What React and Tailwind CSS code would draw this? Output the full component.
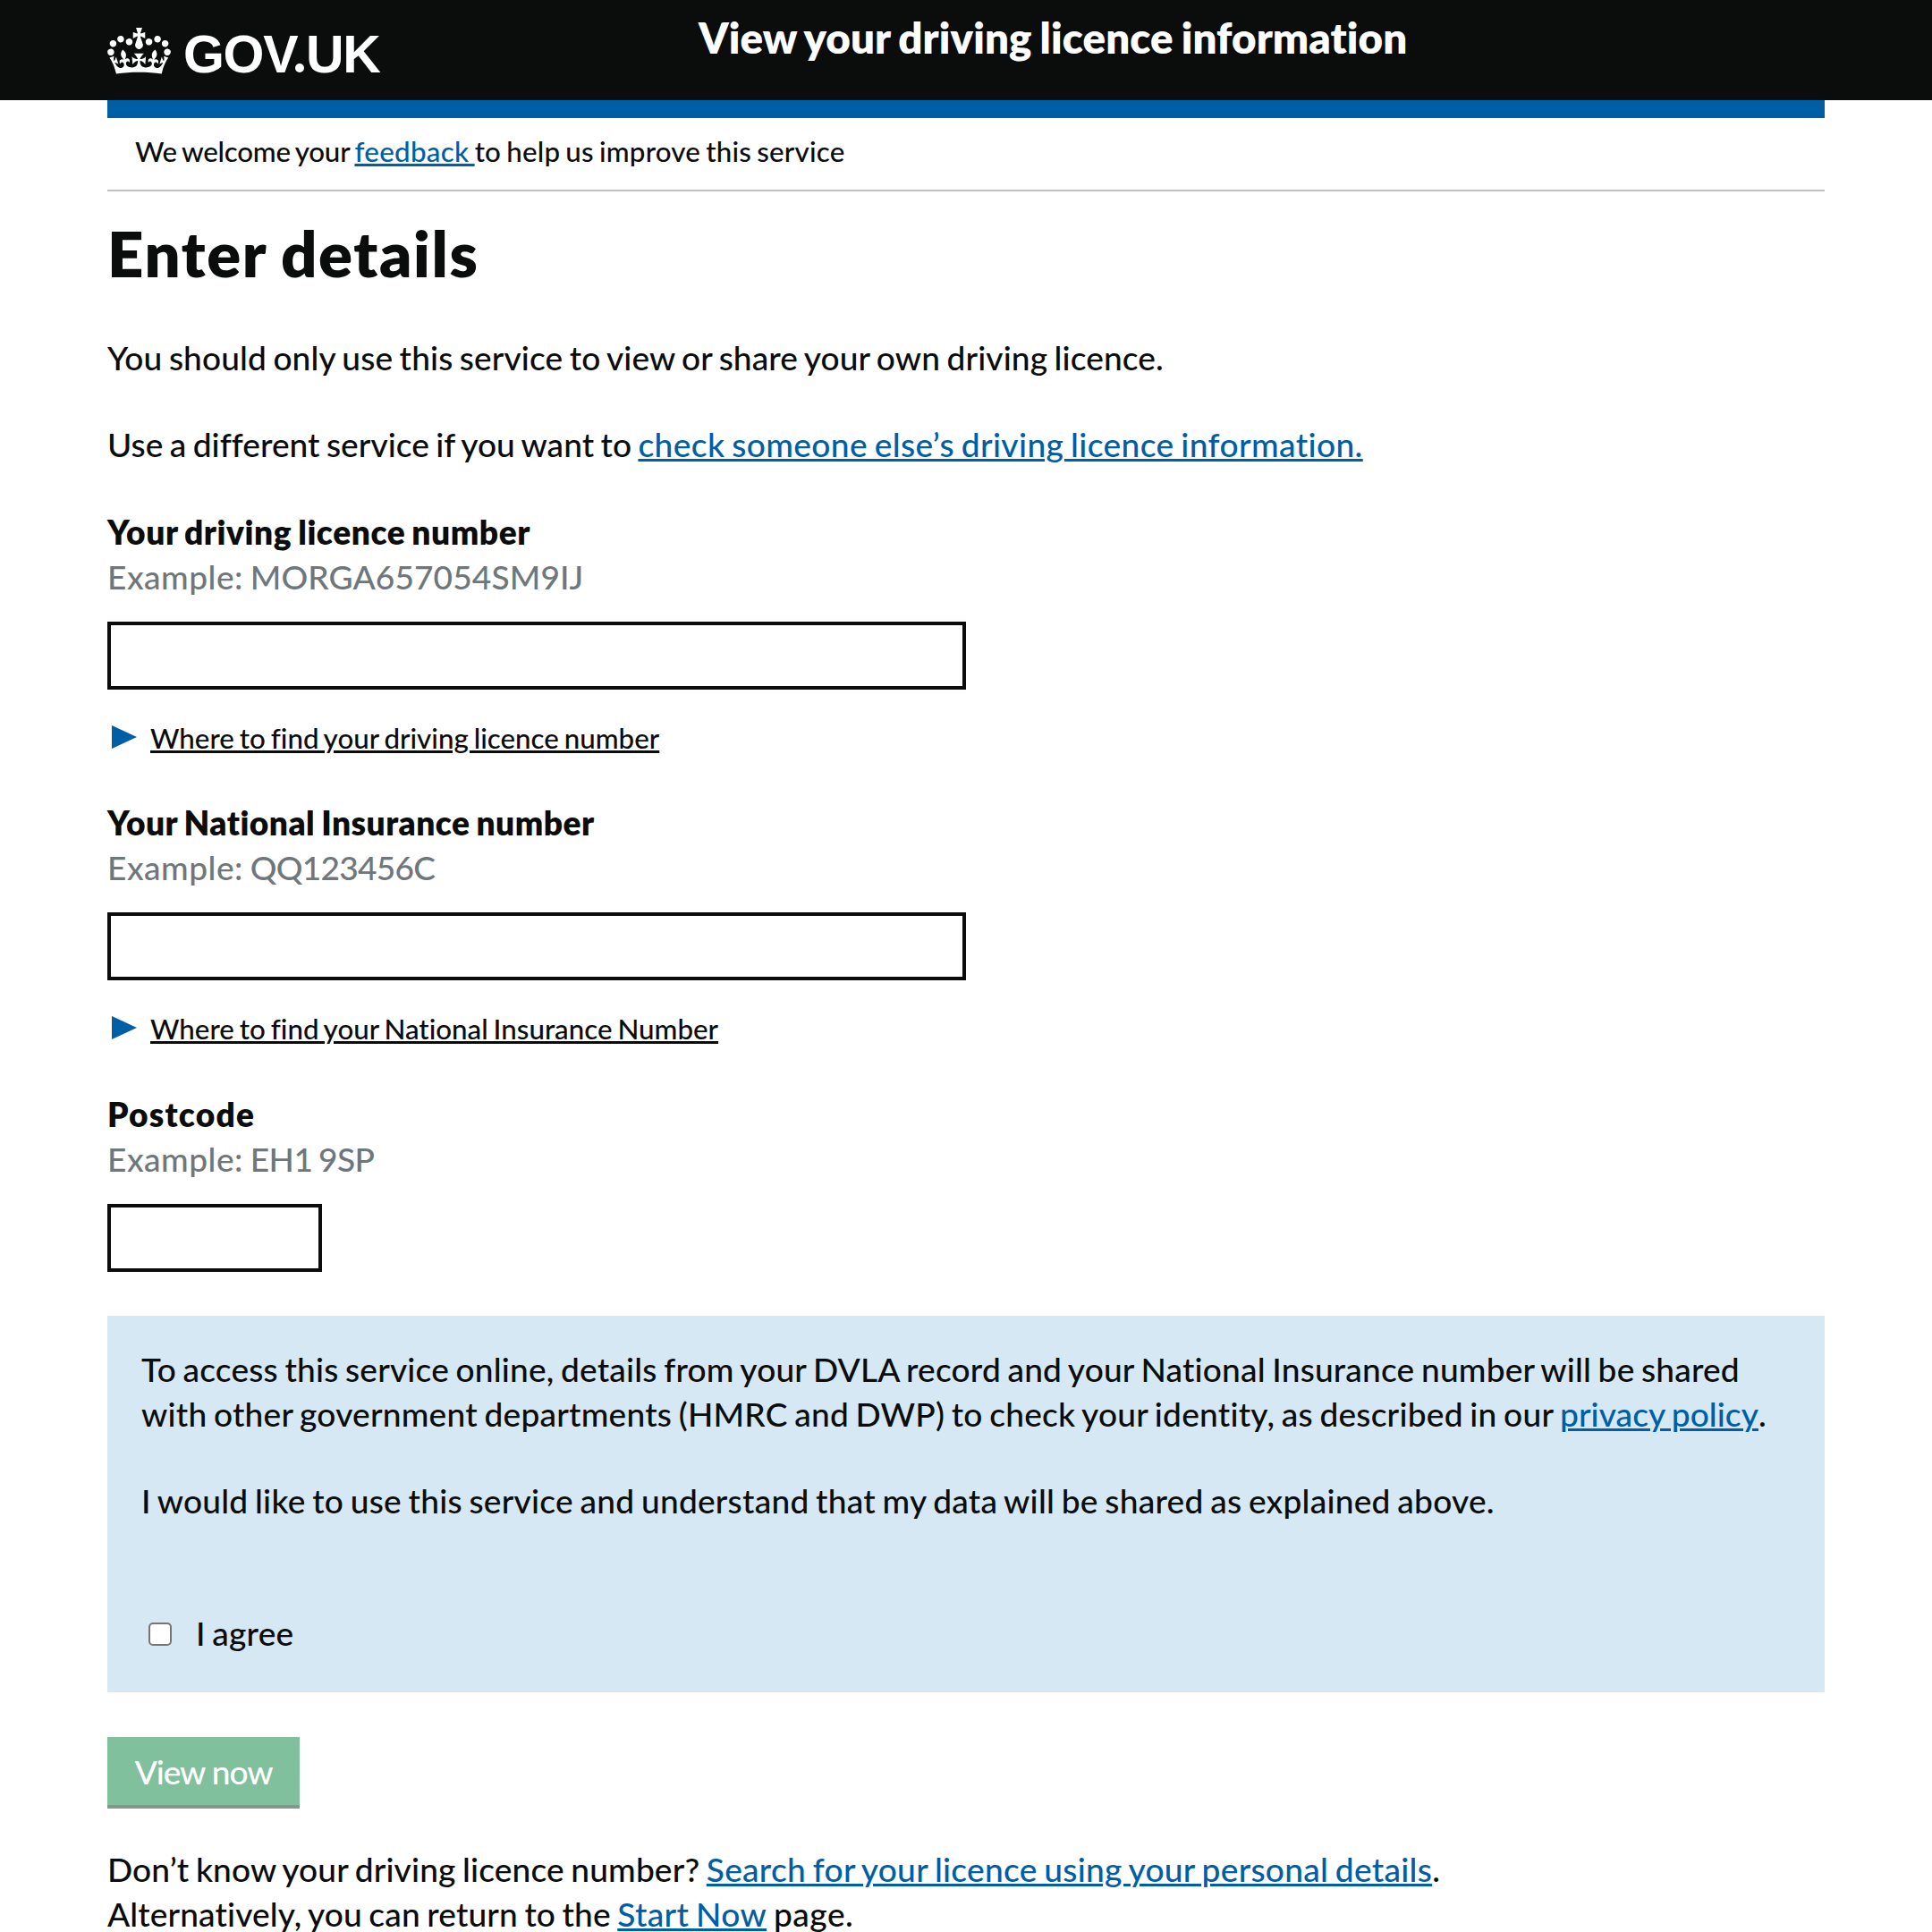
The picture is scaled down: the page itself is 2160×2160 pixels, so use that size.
function Crown() {
  return (
    <svg viewBox="0 0 132 97" className="h-[52px] w-[71px] shrink-0" fill="#ffffff" aria-hidden="true">
      <path
        fillRule="evenodd"
        d="M25 30.2c3.5 1.5 7.7-.2 9.1-3.7 1.5-3.6-.2-7.8-3.9-9.2-3.6-1.4-7.6.3-9.1 3.9-1.4 3.5.3 7.5 3.9 9zM9 39.5c3.6 1.5 7.8-.2 9.2-3.7 1.5-3.6-.2-7.8-3.9-9.1-3.6-1.5-7.6.2-9.1 3.8-1.4 3.5.3 7.5 3.8 9zM4.4 57.2c3.5 1.5 7.7-.2 9.1-3.8 1.5-3.6-.2-7.7-3.9-9.1-3.5-1.5-7.6.3-9.1 3.8-1.4 3.5.3 7.6 3.9 9.1zm38.3-21.4c3.5 1.5 7.7-.2 9.1-3.8 1.5-3.6-.2-7.7-3.9-9.1-3.6-1.5-7.6.3-9.1 3.8-1.3 3.6.4 7.7 3.9 9.1zm64.4-5.6c-3.6 1.5-7.8-.2-9.1-3.7-1.5-3.6.2-7.8 3.8-9.2 3.6-1.4 7.7.3 9.2 3.9 1.3 3.5-.4 7.5-3.9 9zm15.9 9.3c-3.6 1.5-7.7-.2-9.1-3.7-1.5-3.6.2-7.8 3.7-9.1 3.6-1.5 7.7.2 9.2 3.8 1.5 3.5-.3 7.5-3.8 9zm4.7 17.7c-3.6 1.5-7.8-.2-9.2-3.8-1.5-3.6.2-7.7 3.9-9.1 3.6-1.5 7.7.3 9.2 3.8 1.3 3.5-.4 7.6-3.9 9.1zM89.3 35.8c-3.6 1.5-7.8-.2-9.2-3.8-1.4-3.6.2-7.7 3.9-9.1 3.6-1.5 7.7.3 9.2 3.8 1.4 3.6-.3 7.7-3.9 9.1zM69.7 17.7l8.9 4.7V9.3l-8.9 2.8c-.2-.3-.5-.6-.9-.9L72.4 0H59.6l3.5 11.2c-.3.3-.6.5-.9.9l-8.8-2.8v13.1l8.8-4.7c.3.3.6.7.9.9l-5 15.4v.1c-.2.8-.4 1.6-.4 2.4 0 4.1 3.1 7.5 7 8.1h.2c.3 0 .7.1 1 .1.4 0 .7 0 1-.1h.2c4-.6 7.1-4.1 7.1-8.1 0-.8-.1-1.7-.4-2.4V34l-5.1-15.4c.4-.2.7-.6 1-.9zM66 92.8c16.9 0 32.8 1.1 47.1 3.2 4-16.9 8.9-26.7 14-33.5l-9.6-3.4c1 4.9 1.1 7.2 0 10.2-1.5-1.4-3-4.3-4.2-8.7L108.6 76c2.8-2 5-3.2 7.5-3.3-4.4 9.4-10 11.9-13.6 11.2-4.3-.8-6.3-4.6-5.6-7.9 1-4.7 5.7-5.9 8-.5 4.3-8.7-3-11.4-7.6-8.8 7.1-7.2 7.9-13.5 2.1-21.1-8 6.1-8.1 12.3-4.5 20.8-4.7-5.4-12.1-2.5-9.5 6.2 3.4-5.2 7.9-2 7.2 3.1-.6 4.3-6.4 7.8-13.5 7.2-10.3-.9-10.9-8-11.2-13.8 2.5-.5 7.1 1.8 11 7.3L80.2 60c-4.1 4.4-8 5.3-12.3 5.4 1.4-4.4 8-11.6 8-11.6H55.5s6.4 7.2 7.9 11.6c-4.2-.1-8-1-12.3-5.4l1.4 16.4c3.9-5.5 8.5-7.7 10.9-7.3-.3 5.8-.9 12.8-11.1 13.8-7.2.6-12.9-2.9-13.5-7.2-.7-5 3.8-8.3 7.1-3.1 2.7-8.7-4.6-11.6-9.4-6.2 3.7-8.5 3.6-14.7-4.6-20.8-5.8 7.6-5 13.9 2.2 21.1-4.7-2.6-11.9.1-7.7 8.8 2.3-5.5 7.1-4.2 8.1.5.7 3.3-1.3 7.1-5.7 7.9-3.5.7-9-1.8-13.5-11.2 2.5.1 4.7 1.3 7.5 3.3l-4.7-15.4c-1.2 4.4-2.7 7.2-4.3 8.7-1.1-3-.9-5.3 0-10.2l-9.5 3.4c5 6.9 9.9 16.7 14 33.6 14.8-2.1 30.8-3.2 47.7-3.2z"
      />
    </svg>
  );
}

function Link({ className, children }) {
  return (
    <a className={"text-[#005ea5] underline decoration-[3px] underline-offset-[2px] " + className}>{children}</a>
  );
}

function Details({ children }) {
  return (
    <div className="mt-[34px] flex h-10 text-[31.3px] leading-10">
      <svg viewBox="0 0 28 26" className="mt-[6px] ml-[5px] h-[26px] w-7 shrink-0" fill="#005ea5" aria-hidden="true">
        <path d="M0 0L28 13L0 26Z" />
      </svg>
      <span className="ml-[15px] whitespace-pre underline decoration-[3px] underline-offset-[2px]">{children}</span>
    </div>
  );
}

function Field({ label, labelClass, example, exampleClass, inputClass, children }) {
  return (
    <div className="h-[325.33px]">
      <label className={"block font-extrabold " + labelClass}>{label}</label>
      <div className="whitespace-pre text-[#6f777b]">
        <span className="tracking-[0.5px]">Example: </span>
        <span className={exampleClass}>{example}</span>
      </div>
      <input className={"mt-[25px] block h-[76px] border-4 border-[#0b0c0c] bg-white px-2 " + inputClass} />
      {children}
    </div>
  );
}

export default function App() {
  return (
    <div className="h-[2160px] w-[2160px] overflow-hidden bg-white font-['Lato',sans-serif] text-[37.1px] leading-[50px] font-medium text-[#0b0c0c] [font-variant-ligatures:none] [word-spacing:-2px]">
      <header className="h-28 bg-[#0b0c0c] px-[120px] text-white">
        <div className="flex">
          <div className="flex w-[661px] pt-[31px]">
            <Crown />
            <span className="ml-[14px] font-['Liberation_Sans',sans-serif] text-[59px] leading-[60px] font-bold tracking-[-1.3px]">
              GOV
              <span className="relative text-transparent after:absolute after:bottom-[13px] after:left-[3px] after:h-[10px] after:w-[10px] after:rounded-full after:bg-white">
                .
              </span>
              UK
            </span>
          </div>
          <div className="pt-3 text-[47.4px] leading-[60px] font-extrabold tracking-[0.1px]">
            View your driving licence information
          </div>
        </div>
      </header>

      <main className="mx-[120px]">
        <div className="h-5 bg-[#005ea5]" />
        <div className="flex h-[82px] border-b-2 border-[#bfc1c3] pt-[17px] pl-[31px] text-[31.3px] leading-10 whitespace-pre">
          <span className="tracking-[-0.22px]">We welcome your </span>
          <Link className="tracking-[0.3px]">feedback </Link>
          <span className="tracking-[0.21px]">to help us improve this service</span>
        </div>

        <h1 className="mt-[29px] text-[70.5px] leading-[80px] font-extrabold tracking-[1.65px]">Enter details</h1>

        <p className="mt-[52px] tracking-[0.11px] whitespace-pre">
          You should only use this service to view or share your own driving licence.
        </p>
        <p className="mt-[47px] whitespace-pre">
          <span className="tracking-[0.04px]">Use a different service if you want to </span>
          <Link className="tracking-[0.4px]">check someone else’s driving licence information.</Link>
        </p>

        <form className="mt-12">
          <Field
            label="Your driving licence number"
            labelClass="tracking-[0.56px]"
            example="MORGA657054SM9IJ"
            exampleClass="tracking-[0.1px]"
            inputClass="w-[960px]"
          >
            <Details>Where to find your driving licence number</Details>
          </Field>
          <Field
            label="Your National Insurance number"
            labelClass="tracking-[0.47px]"
            example="QQ123456C"
            exampleClass="tracking-[-0.75px]"
            inputClass="w-[960px]"
          >
            <Details>Where to find your National Insurance Number</Details>
          </Field>
          <Field
            label="Postcode"
            labelClass="tracking-[1.2px]"
            example="EH1 9SP"
            exampleClass="tracking-[-0.6px]"
            inputClass="w-[240px]"
          />

          <div className="-mt-[75px] h-[421px] bg-[#d5e8f3] px-[38px] pt-[35px] whitespace-pre">
            <p className="tracking-[0.19px]">
              To access this service online, details from your DVLA record and your National Insurance number will be shared
            </p>
            <p>
              <span className="tracking-[0.23px]">
                {"with other government departments (HMRC and DWP) to check your identity, as described in our "}
              </span>
              <Link className="tracking-[0.06px]">privacy policy</Link>.
            </p>
            <p className="mt-[47px] tracking-[0.25px]">
              I would like to use this service and understand that my data will be shared as explained above.
            </p>
            <label className="mt-[98px] flex">
              <input
                type="checkbox"
                className="mt-[13px] ml-2 h-[26px] w-[26px] appearance-none rounded-[5px] border-2 border-[#767676] bg-white"
              />
              <span className="ml-[27px] tracking-[0.2px]">I agree</span>
            </label>
          </div>

          <button className="mt-[50px] block h-20 w-[215px] border-b-4 border-[#809a8b] bg-[#80c09d] pt-[2px] tracking-[-1.1px] text-white">
            View now
          </button>
        </form>

        <div className="mt-[43px] whitespace-pre">
          <p>
            <span className="tracking-[0.15px]">Don’t know your driving licence number? </span>
            <Link className="tracking-[0.29px]">Search for your licence using your personal details</Link>.
          </p>
          <p>
            <span className="tracking-[0.13px]">Alternatively, you can return to the </span>
            <Link className="tracking-[0.37px]">Start Now</Link>
            <span className="tracking-[0.5px]"> page.</span>
          </p>
        </div>
      </main>
    </div>
  );
}
